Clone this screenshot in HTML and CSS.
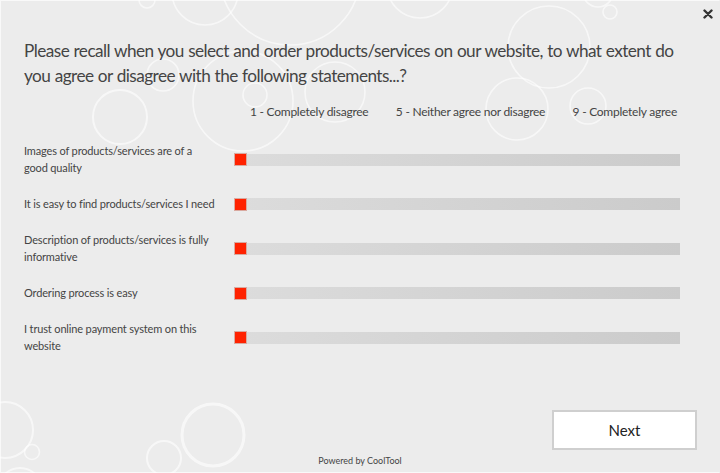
FILE: index.html
```html
<!DOCTYPE html>
<html>
<head>
<meta charset="utf-8">
<link rel="stylesheet" href="styles.css">
</head>
<body>
<div class="frame">
  <svg class="bubbles" width="720" height="473" viewBox="0 0 720 473">
    <g fill="none" stroke="#ffffff" stroke-opacity="0.6" stroke-width="1.6">
      <circle cx="205" cy="-8" r="33"/>
      <circle cx="147" cy="0" r="8"/>
      <circle cx="290" cy="-25" r="70"/>
      <circle cx="163" cy="75" r="16"/>
      <circle cx="120" cy="117" r="27" stroke-width="2"/>
      <circle cx="243" cy="101" r="50"/>
      <circle cx="255" cy="95" r="12"/>
      <circle cx="335" cy="92" r="30"/>
      <circle cx="420" cy="-15" r="33"/>
      <circle cx="549" cy="47" r="41"/>
      <circle cx="517" cy="109" r="31"/>
      <circle cx="588" cy="106" r="18"/>
      <circle cx="598" cy="-8" r="15"/>
      <circle cx="610" cy="12" r="7"/>
      <circle cx="213" cy="435" r="31" stroke-width="3"/>
      <circle cx="164" cy="458" r="17" stroke-width="2"/>
      <circle cx="5" cy="430" r="28" stroke-width="2"/>
      <circle cx="32" cy="452" r="7.5"/>
      <circle cx="20" cy="490" r="22" stroke-width="2"/>
    </g>
  </svg>
  <button class="close" aria-label="Close">
    <svg width="10" height="10" viewBox="0 0 10 10"><path d="M1.5 1.5 L8.5 8.5 M8.5 1.5 L1.5 8.5" stroke="#333" stroke-width="2.4" stroke-linecap="round"/></svg>
  </button>
  <main class="content">
    <h1 class="question">Please recall when you select and order products/services on our website, to what extent do you agree or disagree with the following statements...?</h1>
    <div class="scale">
      <span>1 - Completely disagree</span>
      <span>5 - Neither agree nor disagree</span>
      <span>9 - Completely agree</span>
    </div>
    <div class="rows">
      <div class="row">
        <div class="label">Images of products/services are of a good quality</div>
        <div class="track"><div class="handle"></div></div>
      </div>
      <div class="row">
        <div class="label">It is easy to find products/services I need</div>
        <div class="track"><div class="handle"></div></div>
      </div>
      <div class="row">
        <div class="label">Description of products/services is fully informative</div>
        <div class="track"><div class="handle"></div></div>
      </div>
      <div class="row">
        <div class="label">Ordering process is easy</div>
        <div class="track"><div class="handle"></div></div>
      </div>
      <div class="row">
        <div class="label">I trust online payment system on this website</div>
        <div class="track"><div class="handle"></div></div>
      </div>
    </div>
    <div class="actions">
      <button class="next">Next</button>
    </div>
  </main>
  <footer class="powered">Powered by CoolTool</footer>
</div>
</body>
</html>
```
FILE: styles.css
```css
* { box-sizing: border-box; }
html, body { margin: 0; padding: 0; }
body {
  width: 720px;
  height: 473px;
  background: #ececec;
  font-family: "Lato", "Noto Sans", sans-serif;
  color: #444;
  overflow: hidden;
}
.frame {
  position: relative;
  width: 720px;
  height: 473px;
  border: 1px solid #f9f9f9;
  border-right-color: #ececec;
  display: flex;
  flex-direction: column;
}
.bubbles {
  position: absolute;
  left: -1px;
  top: -1px;
  pointer-events: none;
}
.close {
  position: absolute;
  top: 7px;
  right: 5px;
  width: 12px;
  height: 12px;
  padding: 0;
  border: 0;
  background: none;
  display: flex;
  align-items: center;
  justify-content: center;
}
.content {
  position: relative;
  padding: 37px 39px 0 23px;
  flex: 1;
  display: flex;
  flex-direction: column;
}
.question {
  margin: 0 -6px 0 0;
  font-weight: normal;
  font-size: 17.2px;
  line-height: 25px;
  letter-spacing: -0.55px;
  word-spacing: 0.5px;
  color: #444;
}
.scale {
  display: flex;
  justify-content: space-between;
  margin: 16px 3px 0 226px;
  font-size: 12px;
  line-height: 16px;
  letter-spacing: -0.25px;
  color: #444;
}
.rows {
  margin-top: 23px;
  display: flex;
  flex-direction: column;
  gap: 12px;
}
.row {
  display: flex;
  align-items: center;
  min-height: 32px;
}
.label {
  flex: none;
  width: 210px;
  padding-right: 16px;
  font-size: 11px;
  line-height: 16.5px;
  letter-spacing: -0.15px;
  color: #444;
}
.track {
  flex: 1;
  height: 12px;
  background: linear-gradient(to right, #dcdcdc, #cbcbcb);
  position: relative;
}
.handle {
  width: 13px;
  height: 13px;
  margin-top: -0.5px;
  background: #ff2200;
  border: 1px solid #d9a9a0;
}
.actions {
  margin-top: auto;
  display: flex;
  justify-content: flex-end;
  padding-bottom: 19px;
  margin-right: -17px;
}
.next {
  width: 145px;
  height: 40px;
  background: #fff;
  border: 2px solid #cfcfcf;
  font-family: "Lato", "Noto Sans", sans-serif;
  font-size: 15px;
  color: #222;
}
.powered {
  position: relative;
  text-align: center;
  font-size: 9px;
  line-height: 12px;
  color: #444;
  padding-bottom: 5px;
  margin-top: -14px;
}
```
